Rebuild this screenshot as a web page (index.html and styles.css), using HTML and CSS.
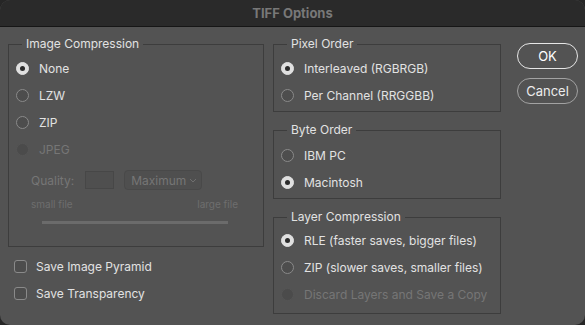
FILE: index.html
```html
<!DOCTYPE html>
<html lang="en">

<head>
    <meta charset="UTF-8">
    <meta name="viewport" content="width=device-width, initial-scale=1.0">
    <link rel="stylesheet" href="styles.css">
    <title>TIFF Options</title>
</head>

<body>

    <div class="window">
        <div class="titlebar">TIFF Options</div>

        <div class="content">
            <div class="col-left">
                <fieldset class="group">
                    <legend>Image Compression</legend>
                    <div class="group-inner">
                        <div class="row"><span class="radio checked"></span>None</div>
                        <div class="row"><span class="radio"></span>LZW</div>
                        <div class="row"><span class="radio"></span>ZIP</div>
                        <div class="row disabled"><span class="radio"></span>JPEG</div>

                        <div class="quality">
                            <span class="quality-label">Quality:</span>
                            <span class="quality-input"></span>
                            <span class="quality-select">Maximum
                                <svg width="8" height="5" viewBox="0 0 8 5">
                                    <path d="M1 1 L4 4 L7 1" fill="none" stroke="#6f6f6f" stroke-width="1" />
                                </svg>
                            </span>
                        </div>
                        <div class="size-labels">
                            <span>small file</span>
                            <span>large file</span>
                        </div>
                        <div class="slider"></div>
                    </div>
                </fieldset>

                <div class="checks">
                    <div class="row"><span class="checkbox"></span>Save Image Pyramid</div>
                    <div class="row"><span class="checkbox"></span>Save Transparency</div>
                </div>
            </div>

            <div class="col-right">
                <fieldset class="group">
                    <legend>Pixel Order</legend>
                    <div class="group-inner">
                        <div class="row"><span class="radio checked"></span>Interleaved (RGBRGB)</div>
                        <div class="row"><span class="radio"></span>Per Channel (RRGGBB)</div>
                    </div>
                </fieldset>

                <fieldset class="group group-bytes">
                    <legend>Byte Order</legend>
                    <div class="group-inner">
                        <div class="row"><span class="radio"></span>IBM PC</div>
                        <div class="row"><span class="radio checked"></span>Macintosh</div>
                    </div>
                </fieldset>

                <fieldset class="group group-layers">
                    <legend>Layer Compression</legend>
                    <div class="group-inner">
                        <div class="row"><span class="radio checked"></span>RLE (faster saves, bigger files)</div>
                        <div class="row"><span class="radio"></span>ZIP (slower saves, smaller files)</div>
                        <div class="row disabled"><span class="radio"></span>Discard Layers and Save a Copy</div>
                    </div>
                </fieldset>
            </div>

            <div class="buttons">
                <button class="btn btn-default">OK</button>
                <button class="btn">Cancel</button>
            </div>
        </div>
    </div>

</body>

</html>
```

FILE: styles.css
```css
body {
    margin: 0;
    background-color: #262626;
    font-family: 'Inter', 'Liberation Sans', sans-serif;
    font-size: 12px;
    color: #e2e2e2;
}

.window {
    width: 585px;
    height: 325px;
    background-color: #535353;
    border-radius: 10px;
    overflow: hidden;
}

.titlebar {
    height: 26px;
    line-height: 26px;
    background-color: #2a2a2a;
    border-bottom: 1px solid #161616;
    text-align: center;
    font-weight: bold;
    font-size: 13px;
    color: #787878;
}

.content {
    display: flex;
    padding: 9px 0 0 8px;
}

.col-left {
    width: 256px;
}

.col-right {
    width: 228px;
    margin-left: 9px;
}

.group {
    margin: 0;
    padding: 0;
    min-width: 0;
    border: 1px solid #3d3d3d;
}

.col-right .group + .group {
    margin-top: 10px;
}

.col-right .group-layers {
    margin-top: 12px;
}

legend {
    margin-left: 13px;
    padding: 0 4px;
    line-height: 16px;
    color: #e2e2e2;
}

.group-inner {
    padding: 3px 0 2px 7px;
}

.group-bytes .group-inner {
    padding-top: 4px;
}

.group-layers .group-inner {
    padding-top: 2px;
    padding-bottom: 5px;
}

.row {
    display: flex;
    align-items: center;
    height: 27px;
}

.row.disabled {
    color: #767676;
}

.radio {
    width: 11px;
    height: 11px;
    border: 1px solid #8a8a8a;
    border-radius: 50%;
    background-color: #4d4d4d;
    margin-right: 10px;
    display: flex;
    align-items: center;
    justify-content: center;
}

.radio.checked {
    background-color: #e0e0e0;
    border-color: #e0e0e0;
}

.radio.checked::after {
    content: '';
    width: 5px;
    height: 5px;
    border-radius: 50%;
    background-color: #2b2b2b;
}

.disabled .radio {
    border-color: #555;
    background-color: #4b4b4b;
}

.quality {
    display: flex;
    align-items: center;
    height: 24px;
    margin-top: 5px;
    padding-left: 15px;
    color: #767676;
}

.quality-input {
    width: 27px;
    height: 16px;
    border: 1px solid #474747;
    background-color: #4f4f4f;
    margin-left: 11px;
}

.quality-select {
    display: flex;
    align-items: center;
    justify-content: space-between;
    width: 66px;
    height: 18px;
    padding: 0 4px 0 6px;
    border: 1px solid #494949;
    border-radius: 4px;
    background-color: #4f4f4f;
    margin-left: 10px;
}

.size-labels {
    display: flex;
    justify-content: space-between;
    margin-top: 4px;
    padding: 0 25px 0 15px;
    line-height: 16px;
    font-size: 10px;
    color: #6e6e6e;
}

.slider {
    height: 3px;
    margin: 9px 35px 20px 26px;
    background-color: #6b6b6b;
}

.checks {
    margin-top: 6px;
    padding-left: 6px;
}

.checkbox {
    width: 11px;
    height: 11px;
    border: 1px solid #8a8a8a;
    border-radius: 3px;
    background-color: #4d4d4d;
    margin-right: 9px;
}

.buttons {
    display: flex;
    flex-direction: column;
    margin-left: 16px;
    margin-top: 7px;
}

.btn {
    width: 61px;
    height: 26px;
    border: 1px solid #a2a2a2;
    border-radius: 13px;
    background-color: #535353;
    color: #ececec;
    font-family: 'Inter', 'Liberation Sans', sans-serif;
    font-size: 13px;
    padding: 0;
    margin-bottom: 9px;
}

.btn-default {
    border-color: #e6e6e6;
    color: #fff;
}
```
